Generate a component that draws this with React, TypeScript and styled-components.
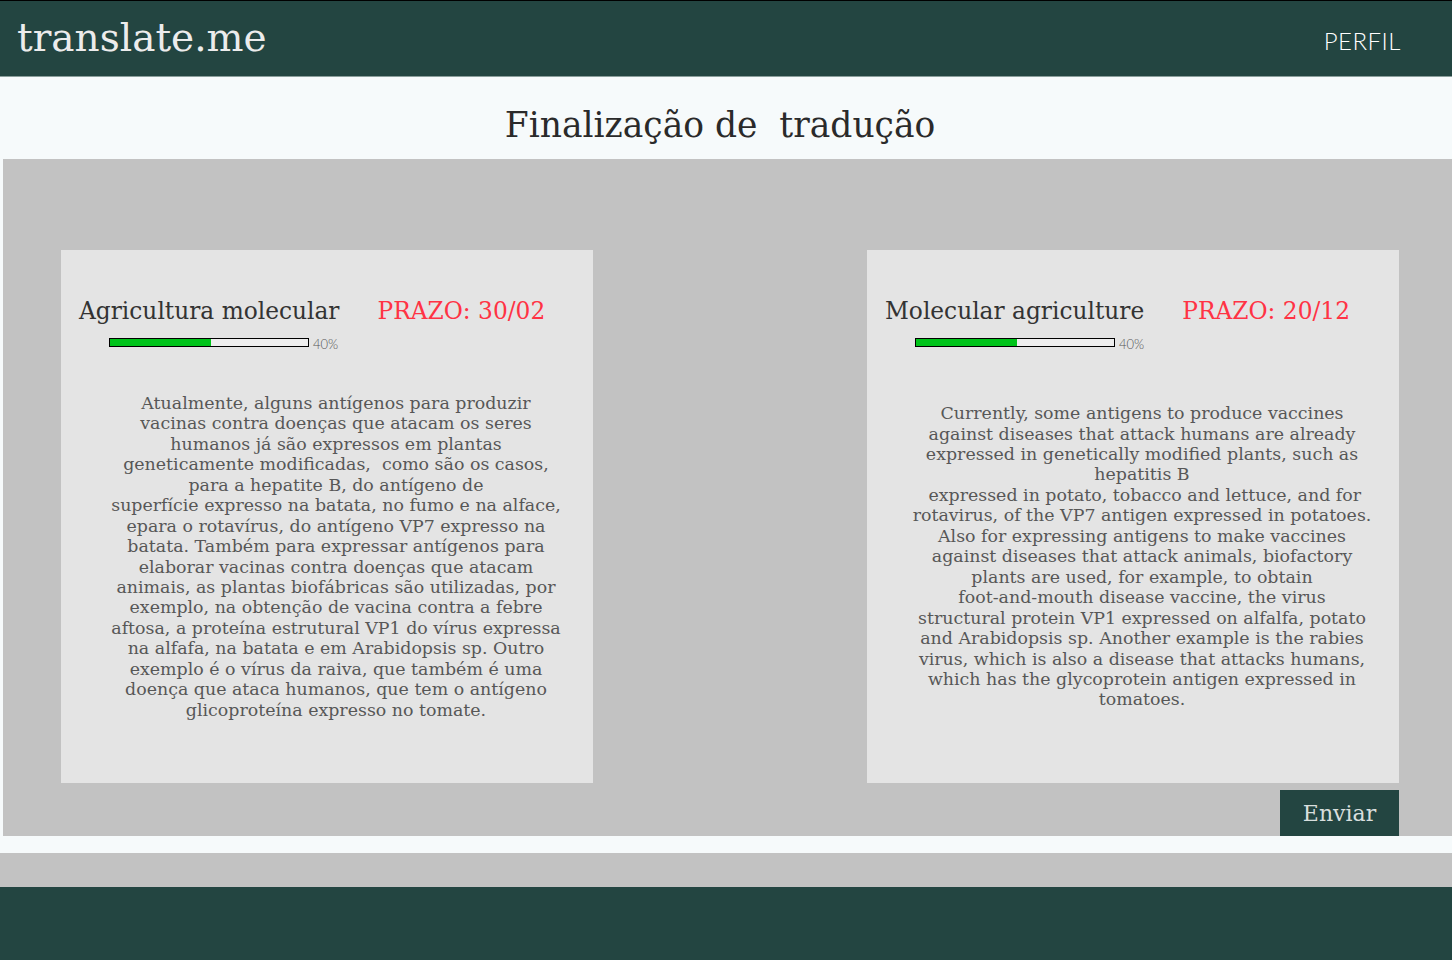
import React from "react";
import styled, { createGlobalStyle } from "styled-components";

const GlobalStyle = createGlobalStyle`
  html, body {
    margin: 0;
    padding: 0;
    background: #f6fafb;
  }
  * {
    box-sizing: border-box;
  }
`;

const serif = `"DejaVu Serif", "Liberation Serif", serif`;

const Header = styled.header`
  height: 77px;
  background-color: #234541;
  border-top: 1px solid #000;
  border-bottom: 1px solid #8a9e9b;
  display: flex;
  align-items: center;
  justify-content: space-between;
  padding: 0 51px 0 17px;
`;

const Logo = styled.div`
  font-family: ${serif};
  font-size: 39px;
  color: #ececec;
  margin-top: -3px;
`;

const NavLink = styled.a`
  font-family: "Lato", "Open Sans", sans-serif;
  font-weight: 300;
  font-size: 24px;
  color: #fff;
  text-decoration: none;
  letter-spacing: 0.5px;
  margin-top: 3px;
`;

const TitleBand = styled.div`
  height: 82px;
  display: flex;
  align-items: center;
  justify-content: center;
  padding-right: 12px;
`;

const PageTitle = styled.h1`
  margin: 0;
  font-family: ${serif};
  font-weight: normal;
  font-size: 34.5px;
  color: #2a2a2a;
  white-space: pre;
  margin-top: 14px;
`;

const Panel = styled.main`
  margin-left: 3px;
  height: 677px;
  background-color: #c2c2c2;
  padding: 91px 53px 0 58px;
  display: flex;
  flex-direction: column;
`;

const CardRow = styled.div`
  display: flex;
  justify-content: space-between;
`;

const Card = styled.section`
  width: 532px;
  height: 533px;
  background-color: #e4e4e4;
  display: flex;
  flex-direction: column;
  padding: 47px 18px 22px 18px;
`;

const CardHead = styled.div`
  display: flex;
  align-items: baseline;
  gap: 38px;
`;

const CardTitle = styled.h2`
  margin: 0;
  font-family: ${serif};
  font-weight: normal;
  font-size: 23.3px;
  color: #333;
`;

const Deadline = styled.span`
  font-family: ${serif};
  font-size: 23.3px;
  color: #ff3344;
`;

const Progress = styled.div`
  display: flex;
  align-items: center;
  gap: 4px;
  margin: 9px 0 0 30px;
`;

const Track = styled.div`
  width: 200px;
  height: 9px;
  border: 1px solid #000;
  background-color: #eeeeee;
  display: flex;
`;

const Fill = styled.div`
  background-color: #00c41a;
  height: 100%;
`;

const Percent = styled.span`
  font-family: "Lato", "Open Sans", sans-serif;
  font-weight: 300;
  font-size: 13px;
  color: #555;
  margin-top: 3px;
`;

const Body = styled.div`
  flex: 1;
  display: flex;
  align-items: center;
  justify-content: center;
  padding-left: 18px;
`;

const Text = styled.p`
  margin: 0;
  font-family: ${serif};
  font-size: 17.4px;
  line-height: 20.45px;
  color: #575757;
  text-align: center;
  white-space: pre;
`;

const Actions = styled.div`
  display: flex;
  justify-content: flex-end;
  margin-top: 7px;
`;

const SendButton = styled.button`
  width: 119px;
  height: 46px;
  border: none;
  background-color: #234541;
  color: #d8dedd;
  font-family: ${serif};
  font-size: 22px;
  cursor: pointer;
`;

const Gap = styled.div`
  height: 17px;
`;

const GreyBand = styled.div`
  height: 34px;
  background-color: #c2c2c2;
`;

const Footer = styled.footer`
  height: 73px;
  background-color: #234541;
`;

type Doc = {
  title: string;
  deadline: string;
  progress: number;
  fill: number;
  text: string;
};

const docs: Doc[] = [
  {
    title: "Agricultura molecular",
    deadline: "PRAZO: 30/02",
    progress: 40,
    fill: 51,
    text: [
      "Atualmente, alguns antígenos para produzir",
      "vacinas contra doenças que atacam os seres",
      "humanos já são expressos em plantas",
      "geneticamente modificadas,  como são os casos,",
      "para a hepatite B, do antígeno de",
      "superfície expresso na batata, no fumo e na alface,",
      "epara o rotavírus, do antígeno VP7 expresso na",
      "batata. Também para expressar antígenos para",
      "elaborar vacinas contra doenças que atacam",
      "animais, as plantas biofábricas são utilizadas, por",
      "exemplo, na obtenção de vacina contra a febre",
      "aftosa, a proteína estrutural VP1 do vírus expressa",
      "na alfafa, na batata e em Arabidopsis sp. Outro",
      "exemplo é o vírus da raiva, que também é uma",
      "doença que ataca humanos, que tem o antígeno",
      "glicoproteína expresso no tomate.",
    ].join("\n"),
  },
  {
    title: "Molecular agriculture",
    deadline: "PRAZO: 20/12",
    progress: 40,
    fill: 51,
    text: [
      "Currently, some antigens to produce vaccines",
      "against diseases that attack humans are already",
      "expressed in genetically modified plants, such as",
      "hepatitis B",
      " expressed in potato, tobacco and lettuce, and for",
      "rotavirus, of the VP7 antigen expressed in potatoes.",
      "Also for expressing antigens to make vaccines",
      "against diseases that attack animals, biofactory",
      "plants are used, for example, to obtain",
      "foot-and-mouth disease vaccine, the virus",
      "structural protein VP1 expressed on alfalfa, potato",
      "and Arabidopsis sp. Another example is the rabies",
      "virus, which is also a disease that attacks humans,",
      "which has the glycoprotein antigen expressed in",
      "tomatoes.",
    ].join("\n"),
  },
];

const App: React.FC = () => {
  return (
    <>
      <GlobalStyle />
      <Header>
        <Logo>translate.me</Logo>
        <NavLink href="#">PERFIL</NavLink>
      </Header>
      <TitleBand>
        <PageTitle>Finalização de  tradução</PageTitle>
      </TitleBand>
      <Panel>
        <CardRow>
          {docs.map((doc) => (
            <Card key={doc.title}>
              <CardHead>
                <CardTitle>{doc.title}</CardTitle>
                <Deadline>{doc.deadline}</Deadline>
              </CardHead>
              <Progress>
                <Track>
                  <Fill style={{ width: `${doc.fill}%` }} />
                </Track>
                <Percent>{doc.progress}%</Percent>
              </Progress>
              <Body>
                <Text>{doc.text}</Text>
              </Body>
            </Card>
          ))}
        </CardRow>
        <Actions>
          <SendButton>Enviar</SendButton>
        </Actions>
      </Panel>
      <Gap />
      <GreyBand />
      <Footer />
    </>
  );
};

export default App;
